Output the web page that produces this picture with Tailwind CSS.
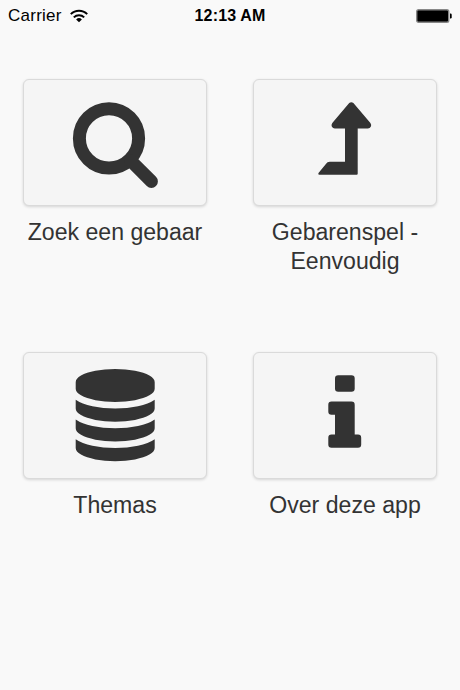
<!DOCTYPE html>
<html lang="nl">

<head>
  <meta charset="UTF-8">
  <meta name="viewport" content="width=device-width, initial-scale=1.0">
  <title>Gebaren</title>
  <script src="https://cdn.jsdelivr.net/npm/@tailwindcss/browser@4"></script>
</head>

<body class="h-[690px] overflow-hidden bg-[#f9f9f9] font-['Liberation_Sans',sans-serif] text-[#333]">

  <!-- Status bar -->
  <header class="grid h-[30px] grid-cols-3 items-center pl-[8px] pr-[8px] text-black">
    <div class="flex items-center gap-2">
      <span class="pt-px text-[17px] leading-[30px] tracking-[0.25px]">Carrier</span>
      <svg class="h-[14px] w-[18px]" viewBox="0 0 18 14" fill="none" stroke="#000" stroke-width="2">
        <path d="M.8 5.1a11.6 11.6 0 0 1 16.4 0M3.8 8.4a7.4 7.4 0 0 1 10.4 0" />
        <path d="M9 13.2 6.1 10.4a4.1 4.1 0 0 1 5.8 0z" fill="#000" stroke="none" />
      </svg>
    </div>
    <span class="pt-px text-center text-[16px] font-bold leading-[30px] tracking-[0.15px]">12:13 AM</span>
    <svg class="h-[14px] w-[36px] justify-self-end" viewBox="0 0 36 14">
      <rect x=".7" y=".7" width="32" height="12.6" rx="1.8" fill="#000" stroke="#888" stroke-width="1.4" />
      <path d="M34 4.5h.5q1.2 0 1.2 1.2v2.6q0 1.2-1.2 1.2H34z" fill="#000" />
    </svg>
  </header>

  <!-- Menu -->
  <main class="grid grid-cols-[184px_184px] auto-rows-[273px] gap-x-[46px] pl-[23px] pt-[49px] text-center text-[23.1px] leading-[28.7px]">
    <a class="block">
      <div class="mb-3 h-[127px] rounded-[6px] border border-[#dadada] bg-[#f5f5f5] shadow-[0_1px_3px_rgba(0,0,0,0.15)]">
        <svg class="h-[125px] w-[182px]" viewBox="0 0 182 125" fill="none" stroke="#333" stroke-width="13">
          <circle cx="85" cy="58.4" r="29.6" />
          <path d="m107 81 20.4 20.4" stroke-linecap="round" />
        </svg>
      </div>
      Zoek een gebaar
    </a>

    <a class="block">
      <div class="mb-3 h-[127px] rounded-[6px] border border-[#dadada] bg-[#f5f5f5] shadow-[0_1px_3px_rgba(0,0,0,0.15)]">
        <svg class="h-[125px] w-[182px]" viewBox="0 0 182 125" fill="#333">
          <path d="M95.2 23.1q2.1-1.8 4.2 0l17 20q1.4 1.9.4 3.7-.9 1.6-2.9 1.6h-10.2v45.3q0 1-1 1H65.4q-1.9 0-.9-1.6l7.4-9.2q1.4-2.2 3.8-2.2H91V48.4H80.8q-2 0-2.9-1.6-1-1.8.4-3.7z" />
        </svg>
      </div>
      Gebarenspel -<br>Eenvoudig
    </a>

    <a class="block">
      <div class="mb-3 h-[127px] rounded-[6px] border border-[#dadada] bg-[#f5f5f5] shadow-[0_1px_3px_rgba(0,0,0,0.15)]">
        <svg class="h-[125px] w-[182px]" viewBox="0 0 182 125" fill="#333">
          <g transform="translate(51.7 16) scale(.05143)">
            <path d="M768 0q208 0 385 34.5t280 93.5 103 128v128q0 69-103 128t-280 93.5-385 34.5-385-34.5-280-93.5-103-128v-128q0-69 103-128t280-93.5 385-34.5z" />
            <path d="M768 768q237 0 443-43t325-127v170q0 69-103 128t-280 93.5-385 34.5-385-34.5-280-93.5-103-128v-170q119 84 325 127t443 43z" />
            <path d="M768 1152q237 0 443-43t325-127v170q0 69-103 128t-280 93.5-385 34.5-385-34.5-280-93.5-103-128v-170q119 84 325 127t443 43z" />
            <path d="M768 1536q237 0 443-43t325-127v170q0 69-103 128t-280 93.5-385 34.5-385-34.5-280-93.5-103-128v-170q119 84 325 127t443 43z" />
          </g>
        </svg>
      </div>
      Themas
    </a>

    <a class="block">
      <div class="mb-3 h-[127px] rounded-[6px] border border-[#dadada] bg-[#f5f5f5] shadow-[0_1px_3px_rgba(0,0,0,0.15)]">
        <svg class="h-[125px] w-[182px]" viewBox="0 0 182 125" fill="#333">
          <rect x="81" y="22.3" width="19.7" height="16.5" rx="3.2" />
          <path d="M77.5 48.6h20q3.2 0 3.2 3.2v29.8h3.3q3.2 0 3.2 3.2v6.7q0 3.2-3.2 3.2H77.5q-3.2 0-3.2-3.2v-6.7q0-3.2 3.2-3.2H81V61.8h-3.5q-3.2 0-3.2-3.2v-6.8q0-3.2 3.2-3.2z" />
        </svg>
      </div>
      Over deze app
    </a>
  </main>

</body>

</html>
